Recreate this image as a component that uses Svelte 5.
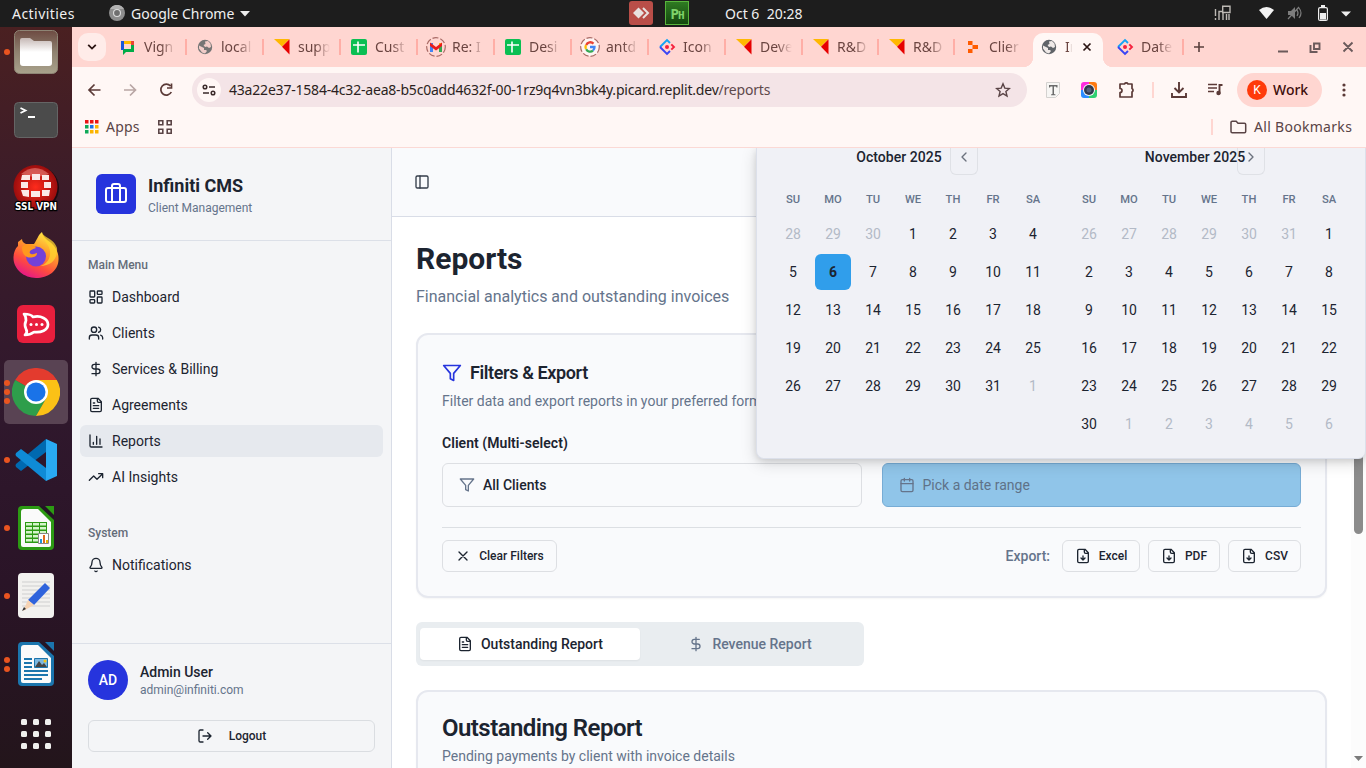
<script>
  const icons = {
    briefcase: '<path d="M16 20V4a2 2 0 0 0-2-2h-4a2 2 0 0 0-2 2v16"/><rect width="20" height="14" x="2" y="6" rx="2"/>',
    dashboard: '<rect width="7" height="9" x="3" y="3" rx="1"/><rect width="7" height="5" x="14" y="3" rx="1"/><rect width="7" height="9" x="14" y="12" rx="1"/><rect width="7" height="5" x="3" y="16" rx="1"/>',
    users: '<path d="M16 21v-2a4 4 0 0 0-4-4H6a4 4 0 0 0-4 4v2"/><circle cx="9" cy="7" r="4"/><path d="M22 21v-2a4 4 0 0 0-3-3.87M16 3.13a4 4 0 0 1 0 7.75"/>',
    dollar: '<path d="M12 2v20M17 5H9.5a3.5 3.5 0 0 0 0 7h5a3.5 3.5 0 0 1 0 7H6"/>',
    file: '<path d="M15 2H6a2 2 0 0 0-2 2v16a2 2 0 0 0 2 2h12a2 2 0 0 0 2-2V7ZM14 2v4a2 2 0 0 0 2 2h4M10 9H8M16 13H8M16 17H8"/>',
    chart: '<path d="M3 3v16a2 2 0 0 0 2 2h16M18 17V9M13 17V5M8 17v-3"/>',
    trend: '<path d="M22 7 13.5 15.5 8.5 10.5 2 17M16 7h6v6"/>',
    bell: '<path d="M10.268 21a2 2 0 0 0 3.464 0M3.262 15.326A1 1 0 0 0 4 17h16a1 1 0 0 0 .74-1.673C19.41 13.956 18 12.499 18 8A6 6 0 0 0 6 8c0 4.499-1.411 5.956-2.738 7.326"/>',
    logout: '<path d="M9 21H5a2 2 0 0 1-2-2V5a2 2 0 0 1 2-2h4M16 17l5-5-5-5M21 12H9"/>',
    panel: '<rect width="18" height="18" x="3" y="3" rx="2"/><path d="M9 3v18"/>',
    filter: '<path d="M22 3H2l8 9.46V19l4 2v-8.54Z"/>',
    calendar: '<path d="M8 2v4M16 2v4M3 10h18"/><rect width="18" height="18" x="3" y="4" rx="2"/>',
    x: '<path d="M18 6 6 18M6 6l12 12"/>',
    fileDown: '<path d="M15 2H6a2 2 0 0 0-2 2v16a2 2 0 0 0 2 2h12a2 2 0 0 0 2-2V7ZM14 2v4a2 2 0 0 0 2 2h4M12 18v-6M9 15l3 3 3-3"/>',
    left: '<path d="m15 18-6-6 6-6"/>',
    right: '<path d="m9 18 6-6-6-6"/>'
  };

  const tabs = [
    ['chat', 'Vign', 77], ['globe', 'local', 77], ['kite', 'supp', 77], ['sheet', 'Cust', 77],
    ['gmail', 'Re: I', 77], ['sheet', 'Desi', 77], ['google', 'antd', 77], ['ant', 'Icon', 77],
    ['kite', 'Deve', 77], ['kite', 'R&D', 76], ['kite', 'R&D', 76], ['replit', 'Clier', 78]
  ];

  const menu = [
    ['dashboard', 'Dashboard'], ['users', 'Clients'], ['dollar', 'Services & Billing'],
    ['file', 'Agreements'], ['chart', 'Reports'], ['trend', 'AI Insights']
  ];

  const weekdays = ['SU', 'MO', 'TU', 'WE', 'TH', 'FR', 'SA'];

  function buildMonth(name, lead, count, trail) {
    const days = [
      ...lead.map((n) => ({ n, out: true })),
      ...Array.from({ length: count }, (_, i) => ({ n: i + 1, out: false })),
      ...Array.from({ length: trail }, (_, i) => ({ n: i + 1, out: true }))
    ];
    return { name, days };
  }

  const months = [
    buildMonth('October 2025', [28, 29, 30], 31, 1),
    buildMonth('November 2025', [26, 27, 28, 29, 30, 31], 30, 6)
  ];

  const dock = [
    ['files', 1], ['terminal', 0], ['vpn', 0], ['firefox', 0], ['rocket', 0], ['chrome', 3],
    ['code', 1], ['calc', 1], ['editor', 1], ['writer', 2]
  ];
</script>

{#snippet icon(name, size)}
  <svg class="lucide" width={size} height={size} viewBox="0 0 24 24">{@html icons[name]}</svg>
{/snippet}

{#snippet favicon(kind)}
  <svg class="favicon" width="16" height="16" viewBox="0 0 16 16">
    {#if kind === 'chat'}
      <path d="M4 2h9v3H4z" fill="#ffba00" /><path d="M11 2h3v4h-3z" fill="#ea4335" />
      <path d="M11 6h3v7H6l-3 3v-6h8z" fill="#00ac47" /><path d="M1 2h3v9H1z" fill="#1a56db" />
    {:else if kind === 'globe'}
      <circle cx="8" cy="8" r="7.2" fill="#757575" />
      <path d="M2 6.500 5 8l2 1v2h2l1 1-2 2.500-3-1-3-4zM8 2.500l3-.5 2.500 2.500L14 8l-2 1-2-1.500L8 8 6.500 6l2-1z" fill="#ffd6d1" opacity=".9" />
    {:else if kind === 'kite'}
      <path d="M0 0h15.5L8 7.5z" fill="#ffb800" /><path d="M15.5.3v15.2L8 7.8z" fill="#e60000" />
    {:else if kind === 'sheet'}
      <rect width="16" height="16" rx="2" fill="#0abf53" /><path d="M7 2.500v11M2 6h12" stroke="#fff" stroke-width="1.600" />
    {:else if kind === 'gmail'}
      <circle cx="8" cy="8" r="9.3" fill="none" stroke="#a86a65" stroke-width="1.2" stroke-dasharray="6 2" />
      <path d="M2 13V4h3v9z" fill="#4285f4" /><path d="M11 13V4h3v9z" fill="#34a853" /><path d="M11 4h3v3h-3z" fill="#fbbc04" />
      <path d="M2 3.5 8 8l6-4.500v3.500L8 11.500 2 7z" fill="#ea1c1c" />
    {:else if kind === 'google'}
      <circle cx="8" cy="8" r="9.3" fill="#fff4f2" stroke="#a86a65" stroke-width="1.2" stroke-dasharray="6 2" />
      <g fill="none" stroke-width="2.3"><path d="M11.500 4.600A4.500 4.500 0 0 0 4.200 6" stroke="#ea4335" /><path d="M4 6a4.500 4.500 0 0 0 0 4.100" stroke="#fbbc04" />
      <path d="M4.200 10.200a4.500 4.500 0 0 0 6.800 1.400" stroke="#34a853" /><path d="M8 8h4.500a4.500 4.500 0 0 1-1.500 3.500" stroke="#4285f4" /></g>
    {:else if kind === 'ant'}
      <g fill="none" stroke-width="1.900"><path d="M11 4 8 1 1 8" stroke="#14a4f5" /><path d="m1 8 7 7 3-3" stroke="#3a45f5" /><path d="M12.300 5.300 15 8l-2.700 2.700" stroke="#f5223d" /></g>
      <circle cx="8" cy="8" r="2" fill="#f5223d" />
    {:else}
      <path d="M3 2h4.500v4H3zM7.500 6H13v4H7.500zM3 10h4.500v4H3z" fill="#ff5c00" />
    {/if}
  </svg>
{/snippet}

{#snippet app(kind)}
  {#if kind === 'files'}
    <svg width="44" height="44" viewBox="0 0 44 44"><defs><linearGradient id="fg" x2="0" y2="1"><stop stop-color="#6d4a42" /><stop offset=".5" stop-color="#8f8270" /><stop offset="1" stop-color="#a9a28c" /></linearGradient><linearGradient id="ff" x2="0" y2="1"><stop stop-color="#c5b8b5" /><stop offset=".5" stop-color="#fff" /></linearGradient></defs><rect x=".5" y=".5" width="43" height="43" rx="5" fill="url(#fg)" stroke="#8e8575" /><path d="M6 10a2 2 0 0 1 2-2h8l4 3h16a2 2 0 0 1 2 2v20a3 3 0 0 1-3 3H9a3 3 0 0 1-3-3z" fill="url(#ff)" /></svg>
  {:else if kind === 'terminal'}
    <svg width="44" height="36" viewBox="0 0 44 36"><rect x=".5" y=".5" width="43" height="35" rx="4" fill="#4b4b4b" stroke="#656565" /><path d="m6.500 6 5 2.500-5 2.500M14 15h7" fill="none" stroke="#fff" stroke-width="1.800" /></svg>
  {:else if kind === 'vpn'}
    <svg width="46" height="48" viewBox="0 0 46 48"><defs><radialGradient id="vg"><stop stop-color="#ff2b1c" /><stop offset="1" stop-color="#9b0d0d" /></radialGradient></defs><circle cx="24" cy="24" r="22" fill="#1c0b12" /><circle cx="22.500" cy="23" r="22" fill="url(#vg)" /><path d="M8 10q14-12 28 0-14 6-28 0" fill="#f39b94" opacity=".5" /><path d="M9 11h8v5H8zM19 10h8v6h-8zM29 11h7v5h-7zM8 18h7v6H8zM31 18h7v6h-7zM8 26h8v7l-6-1zM18 27h9v6h-9zM29 26h8l-1 6h-7z" fill="#fbe9e7" /><text x="2" y="46" textLength="42" lengthAdjust="spacingAndGlyphs" font-family="DejaVu Sans" font-size="10" font-weight="700" fill="#fff" stroke="#000" stroke-width="2.400" paint-order="stroke">SSL VPN</text></svg>
  {:else if kind === 'firefox'}
    <svg width="48" height="48" viewBox="0 0 48 48"><defs><linearGradient id="fx" x1=".8" y1="0" x2=".3" y2="1"><stop stop-color="#fff44f" /><stop offset=".35" stop-color="#ffa52b" /><stop offset=".7" stop-color="#ff4d3d" /><stop offset="1" stop-color="#e4158b" /></linearGradient></defs><path d="M30 0c1 5 4 7 8 10 5 4 9 10 8.500 18C46 39 36 46 24 46S1 37 1.500 25C2 19 4 16 6 14v-4l4-3c0 3 2 4 4 5h8c3-4 4-9 8-12" fill="url(#fx)" /><circle cx="24" cy="24.500" r="10" fill="#7341d8" /><path d="M10 15c5-5 12-2 14 1-6 2-8 4-5 6 3 1 4-1 6-1 0 5-7 5-10 4-4-2-5-6-5-10" fill="#ff981d" /><path d="M30 1c0 7 7 10 8 18 1 9-5 14-10 15 12 0 18-8 17-18-2-6-6-8-9-10-3-2-5-3-6-5" fill="#ffd62f" opacity=".75" /></svg>
  {:else if kind === 'rocket'}
    <svg width="38" height="38" viewBox="0 0 38 38"><rect width="38" height="38" rx="6" fill="#e81f3d" /><path d="M7 9q7 0 9 3c8-2 15 2 15 7.500S24 28 17 27q-4 3-9 3 3-3 1-6-2-4 0-8.500Q9 11 7 9z" fill="none" stroke="#fff" stroke-width="2.700" stroke-linejoin="round" /><circle cx="14" cy="19.500" r="1.500" fill="#fff" /><circle cx="19.500" cy="19.500" r="1.500" fill="#fff" /><circle cx="25" cy="19.500" r="1.500" fill="#fff" /></svg>
  {:else if kind === 'chrome'}
    <svg width="48" height="48" viewBox="0 0 48 48"><path d="M24 24 3.200 12A24 24 0 0 1 44.800 12z" fill="#e33b2e" /><path d="M24 24 3.200 12A24 24 0 0 0 24 48L34.400 30z" fill="#2e9e4b" /><path d="M24 12h20.800A24 24 0 0 1 24 48l10.400-18z" fill="#fbc116" /><circle cx="24" cy="24" r="12" fill="#fff" /><circle cx="24" cy="24" r="9.500" fill="#1a73e8" /></svg>
  {:else if kind === 'code'}
    <svg width="42" height="42" viewBox="0 0 42 42"><path d="M31 0v13L6 32 1 28q-1-2 0-3z" fill="#0069b0" /><path d="M31 42V29L6 10l-5 4q-1 2 0 3z" fill="#0f8bd6" /><path d="m31 0 11 5v32l-11 5z" fill="#29aaf3" /></svg>
  {:else if kind === 'calc' || kind === 'writer'}
    {@const c = kind === 'calc' ? '#2c9a13' : '#1b75ad'}
    <svg width="36" height="44" viewBox="0 0 36 44"><rect width="36" height="44" rx="4" fill={c} /><path d="M3 6a3 3 0 0 1 3-3h14l13 13v23a2 2 0 0 1-2 2H5a2 2 0 0 1-2-2z" fill="#fafafa" /><path d="M21 0h15v14z" fill="#241525" /><path d="M27 0h9v9z" fill={c} />
      {#if kind === 'calc'}
        <rect x="7" y="16" width="22" height="21" fill="#2c9a13" /><path d="M8 17h6v2.500H8zM15 17h6v2.500h-6zM22 17h6v2.500h-6zM8 21h6v2.500H8zM15 21h6v2.500h-6zM22 21h6v2.500h-6zM8 25h6v2.500H8zM15 25h6v2.500h-6zM22 25h6v2.500h-6zM8 29h6v2.500H8zM15 29h6v2.500h-6zM8 33h6v2.500H8zM15 33h6v2.500h-6z" fill="#d4f5c9" /><path d="M20.500 27.500h10v10h-10z" fill="#fff" stroke="#888" /><path d="M22 33h2v4h-2z" fill="#2196d8" /><path d="M25 29h2v8h-2z" fill="#e06a1c" /><path d="M28 34h2v3h-2z" fill="#e8b500" />
      {:else}
        <path d="M6 17h8M6 21h8M6 25h8M6 29h24M6 33h24M6 37h18" stroke="#1b75ad" stroke-width="2" /><path d="M16.500 16.500h13v9h-13z" fill="#7db8e0" stroke="#1b75ad" /><path d="m17 25 4-6 3 4 2-2 3 4z" fill="#444" /><circle cx="27" cy="19" r="1.500" fill="#f5c211" />
      {/if}
    </svg>
  {:else}
    <svg width="36" height="46" viewBox="0 0 36 46"><rect width="36" height="45" rx="4" fill="#f2f1ef" /><path d="M4 9h28M4 13h28M4 17h28M4 21h28M4 25h28M4 29h28M4 33h28" stroke="#cfcfcf" /><path d="m10 27 17-17 5 5-16 17z" fill="#2f63dc" /><path d="m10 27 6 5-11 6z" fill="#f6d3b3" /><path d="m6 34-2 4 4-2z" fill="#333" /></svg>
  {/if}
{/snippet}

<div class="desktop">
  <header class="topbar">
    <span class="activities">Activities</span>
    <svg class="tb-chrome" width="16" height="16" viewBox="0 0 16 16"><circle cx="8" cy="8" r="8" fill="#8d8d8d" /><path d="M1 4a8 8 0 0 1 14 0H8z" fill="#b0b0b0" /><circle cx="8" cy="8" r="4" fill="#ddd" /><circle cx="8" cy="8" r="2.900" fill="#6f6f6f" /></svg>
    <span class="appname">Google Chrome</span>
    <svg class="caret" width="10" height="6"><path d="M0 0h10L5 5.500z" fill="#eee" /></svg>
    <svg class="anydesk" width="24" height="24" viewBox="0 0 24 24"><rect width="24" height="24" rx="3" fill="#b94e48" /><path d="m9.500 6.500 5.500 5.500-5.500 5.500L4 12z" fill="#e8e2e0" /><path d="m14 7 5 5-5 5" fill="none" stroke="#e8e2e0" stroke-width="2" /></svg>
    <span class="ph">P<small>H</small></span>
    <span class="clock">Oct 6&nbsp; 20:28</span>
    <svg class="tray" width="140" height="20" viewBox="0 0 140 20">
      <g fill="none" stroke="#bdb9b4" stroke-width="1.400"><path d="M2.500 6v7M2.500 15v2M6 17V8.500h3M10 17V9M13.500 17v-6M16 17v-6M9.700 3.200h7.300v6.300H9.700z" /></g>
      <path d="M46 7q7.500-6 15 0l-7.500 9z" fill="#f2f2f2" />
      <g opacity=".5"><path d="M75 8h3l4-4v12l-4-4h-3z" fill="#ddd" /><path d="M84 7q2 3 0 6M86 5q4 5 0 10M75 16 86 4" fill="none" stroke="#ddd" stroke-width="1.200" /></g>
      <path d="M108 2h4v2h-4z" fill="#eee" /><rect x="105.600" y="4.600" width="8.800" height="12.800" rx="1.500" fill="none" stroke="#eee" stroke-width="1.200" /><path d="M107 10h6v6.500h-6z" fill="#eee" />
      <path d="M128 8.500h10l-5 5z" fill="#eee" />
    </svg>
  </header>

  <div class="below">
    <nav class="dock">
      {#each dock as [kind, dots]}
        <div class="dock-item" class:current={kind === 'chrome'}>
          <div class="dots">{#each { length: dots } as _}<i></i>{/each}</div>
          {@render app(kind)}
        </div>
      {/each}
      <div class="grid-dots">{#each { length: 9 } as _}<i></i>{/each}</div>
    </nav>

    <div class="window">
      <div class="tabstrip">
        <div class="tab-search"><svg width="10" height="8" viewBox="0 0 10 8"><path d="m1.200 1.800 3.800 3.800 3.800-3.800" fill="none" stroke="#2b1513" stroke-width="1.800" /></svg></div>
        {#each tabs as [kind, label, w], i}
          <div class="tab" class:nosep={i === tabs.length - 1} style="width: {w}px">{@render favicon(kind)}<span>{label}</span></div>
        {/each}
        <div class="tab active">
          <svg class="favicon" width="16" height="16" viewBox="0 0 16 16"><circle cx="8" cy="8" r="7.200" fill="#5f6368" /><path d="M2 6.500 5 8l2 1v2h2l1 1-2 2.500-3-1-3-4zM8 2.500l3-.5 2.500 2.500L14 8l-2 1-2-1.500L8 8 6.500 6l2-1z" fill="#fff7f5" opacity=".9" /></svg>
          <span>In</span>
          <svg width="10" height="10" viewBox="0 0 10 10"><path d="m1.500 1.500 7 7m0-7-7 7" stroke="#2b1513" stroke-width="1.700" /></svg>
        </div>
        <div class="tab last" style="width: 81px">{@render favicon('ant')}<span>Date</span></div>
        <svg class="plus" width="12" height="12"><path d="M6 1v10M1 6h10" stroke="#5a403d" stroke-width="1.600" /></svg>
        <svg class="winctl" width="78" height="14" viewBox="0 0 78 14"><g fill="none" stroke="#6b5a5b" stroke-width="1.900"><path d="M1 11.500h10M37 3.500h5.500v5.500H37zM33.500 5v7h7M66.500 2.500l9 9m0-9-9 9" /></g></svg>
      </div>

      <div class="toolbar">
        <svg class="navicons" width="100" height="20" viewBox="0 0 100 20"><g fill="none" stroke-width="1.700"><path d="M16.500 10H5.500M10.500 4.500 5 10l5.500 5.500" stroke="#5b3a37" /><path d="M40 10h11.500M46 4.500l5.500 5.500-5.500 5.500" stroke="#b9a6a4" /><path d="M86.500 6a5.500 5.500 0 1 0 .8 6M87.500 3.500V8H83" stroke="#5b3a37" /></g></svg>
        <div class="url">
          <div class="site"><svg width="14" height="12" viewBox="0 0 14 12"><g fill="none" stroke="#3a2a2a" stroke-width="1.500"><circle cx="3" cy="3" r="1.800" /><path d="M7 3h6M1 9h6" /><circle cx="11" cy="9" r="1.800" /></g></svg></div>
          <span class="addr">43a22e37-1584-4c32-aea8-b5c0add4632f-00-1rz9q4vn3bk4y.picard.replit.dev<em>/reports</em></span>
          <svg class="star" width="16" height="16" viewBox="0 0 16 16"><path d="m8 1.800 1.800 4.300 4.600.4-3.500 3 1.100 4.500L8 11.600 4 14l1.100-4.500-3.500-3 4.600-.4z" fill="none" stroke="#5a4446" stroke-width="1.400" /></svg>
        </div>
        <svg class="ext" width="190" height="20" viewBox="0 0 190 20">
          <path d="M4.500 2.500h13v11l-4 4h-9z" fill="#f7f6f4" stroke="#d4d2d0" /><path d="M7 5h8.500v2.500h-1L14 6.500h-2v7.500l1.500.5v.7H9v-.7l1.500-.5V6.500h-2L8 7.500H7z" fill="#6b6b6b" />
          <path d="M39 5a3 3 0 0 1 3-3h5v8h-8z" fill="#ff2ce0" /><path d="M47 2h5a3 3 0 0 1 3 3v5h-8z" fill="#ff7a12" /><path d="M39 10h8v8h-5a3 3 0 0 1-3-3z" fill="#2b8cff" /><path d="M47 10h8v5a3 3 0 0 1-3 3h-5z" fill="#2fd071" />
          <circle cx="47" cy="10" r="6" fill="#f4f4f4" /><circle cx="47" cy="10" r="5" fill="#30394d" /><circle cx="47" cy="10" r="2.500" fill="#55617a" />
          <path d="M77 4h4.500a2 2 0 0 1 3.500 0h4v4.500a2 2 0 0 1 0 3.500v5H77v-4.500a2 2 0 0 0 0-4z" transform="translate(1 0)" fill="none" stroke="#5b3a37" stroke-width="1.700" stroke-linejoin="round" />
          <path d="M110 2h2v16h-2z" fill="#ffd6d1" />
          <g fill="none" stroke="#5b3a37" stroke-width="1.900"><path d="M137 2v10M132.500 8l4.500 4.500L141.500 8M130 13v4h14v-4" /><path d="M166 4.500h9M166 8h9M166 11.500h6" stroke-width="1.500" /><path d="M177.500 14V5h3" /></g><circle cx="176.500" cy="13" r="2.200" fill="#5b3a37" />
        </svg>
        <div class="profile"><b>K</b><span>Work</span></div>
        <svg class="more" width="4" height="16"><circle cx="2" cy="3" r="1.600" fill="#5b3a37" /><circle cx="2" cy="8" r="1.600" fill="#5b3a37" /><circle cx="2" cy="13" r="1.600" fill="#5b3a37" /></svg>
      </div>

      <div class="bookmarks">
        <svg width="14" height="14" viewBox="0 0 14 14"><path d="M0 0h3.500v3.500H0zM5 0h3.500v3.500H5zM10 0h3.500v3.500H10z" fill="#ea1515" /><path d="M0 5h3.500v3.500H0zM0 10h3.500v3.500H0z" fill="#0fa958" /><path d="M5 5h3.500v3.500H5z" fill="#1a73e8" /><path d="M10 5h3.500v3.500H10zM5 10h3.500v3.500H5zM10 10h3.500v3.500H10z" fill="#fbb400" /></svg>
        <span class="apps">Apps</span>
        <svg class="boxes" width="14" height="14" viewBox="0 0 14 14"><path d="M.8.8h4v4h-4zM9.200.8h4v4h-4zM.8 9.200h4v4h-4zM9.200 9.200h4v4h-4z" fill="none" stroke="#5a4446" stroke-width="1.600" /></svg>
        <i class="bar"></i>
        <svg width="17" height="14" viewBox="0 0 17 14"><path d="M1 2.500a1.200 1.200 0 0 1 1.200-1.200h4l1.800 2h6.500a1.200 1.200 0 0 1 1.200 1.200v7a1.200 1.200 0 0 1-1.200 1.200H2.200A1.200 1.200 0 0 1 1 11.500z" fill="none" stroke="#5a4446" stroke-width="1.500" /></svg>
        <span class="all">All Bookmarks</span>
      </div>

      <div class="page">
        <aside>
          <div class="brand">
            <div class="logo">{@render icon('briefcase', 24)}</div>
            <div><h2>Infiniti CMS</h2><p>Client Management</p></div>
          </div>
          <div class="menus">
            <h6>Main Menu</h6>
            {#each menu as [ic, label]}
              <a class:on={label === 'Reports'}>{@render icon(ic, 16)}{label}</a>
            {/each}
            <h6 class="sys">System</h6>
            <a>{@render icon('bell', 16)}Notifications</a>
          </div>
          <div class="foot">
            <div class="user"><div class="avatar">AD</div><div><b>Admin User</b><p>admin@infiniti.com</p></div></div>
            <div class="logout">{@render icon('logout', 16)}Logout</div>
          </div>
        </aside>

        <main>
          <div class="head">{@render icon('panel', 16)}</div>
          <div class="content">
            <h1>Reports</h1>
            <p class="sub">Financial analytics and outstanding invoices</p>
            <section class="card filters">
              <h3>{@render icon('filter', 20)}Filters &amp; Export</h3>
              <p class="desc">Filter data and export reports in your preferred format</p>
              <div class="lbl">Client (Multi-select)</div>
              <div class="fields">
                <div class="field">{@render icon('filter', 16)}All Clients</div>
                <div class="field date">{@render icon('calendar', 16)}Pick a date range</div>
              </div>
              <div class="actions">
                <div class="btn clear">{@render icon('x', 16)}Clear Filters</div>
                <span class="export">Export:</span>
                <div class="btn" style="width: 78px">{@render icon('fileDown', 16)}Excel</div>
                <div class="btn" style="width: 72px">{@render icon('fileDown', 16)}PDF</div>
                <div class="btn" style="width: 73px">{@render icon('fileDown', 16)}CSV</div>
              </div>
            </section>
            <div class="switch">
              <div class="sel">{@render icon('file', 16)}Outstanding Report</div>
              <div>{@render icon('dollar', 16)}Revenue Report</div>
            </div>
            <section class="card report">
              <h2>Outstanding Report</h2>
              <p class="desc">Pending payments by client with invoice details</p>
            </section>
          </div>
        </main>

        <div class="scroll"><div class="thumb"></div><svg width="9" height="5"><path d="M0 0h9L4.500 5z" fill="#7b7b7b" /></svg></div>

        <div class="popover">
          {#each months as m, mi}
            <div class="month">
              <div class="caption">{m.name}</div>
              <div class="nav" class:next={mi === 1}>{@render icon(mi ? 'right' : 'left', 16)}</div>
              <div class="days week">{#each weekdays as d}<span>{d}</span>{/each}</div>
              <div class="days">
                {#each m.days as d}
                  <span class:out={d.out} class:today={mi === 0 && d.n === 6}>{d.n}</span>
                {/each}
              </div>
            </div>
          {/each}
        </div>
      </div>
    </div>
  </div>
</div>

<style>
  * { box-sizing: border-box; }
  h1, h2, h3, h6, p { margin: 0; }
  svg { flex: none; display: block; }
  .desktop { width: 1366px; height: 768px; overflow: hidden; display: flex; flex-direction: column; font-family: Roboto, sans-serif; color: #1c2430; white-space: nowrap; }
  .lucide { fill: none; stroke: currentColor; stroke-width: 2; stroke-linecap: round; stroke-linejoin: round; }

  .topbar { height: 27px; flex: none; background: #1d1d1d; color: #f0f0f0; display: flex; align-items: center; font: 14px "Noto Sans", sans-serif; padding: 0 0 1px 12px; }
  .activities { width: 97px; letter-spacing: .45px; }
  .appname { margin-left: 6px; width: 104px; }
  .caret { margin: 2px 0 0 5px; }
  .anydesk { margin-left: 379px; }
  .ph { width: 24px; height: 24px; margin-left: 12px; border: 1px solid #58b53c; background: linear-gradient(#2f7a22, #14480f); color: #7fd36a; font: 700 14px/24px "DejaVu Sans Mono", monospace; text-align: center; letter-spacing: -1px; }
  .ph small { font-size: 11px; }
  .clock { margin-left: 36px; width: 79px; }
  .tray { margin-left: 409px; }

  .below { flex: 1; min-height: 0; display: flex; }
  .dock { width: 72px; background: linear-gradient(#4a2021, #3c1c29 22%, #30182d 50%, #2a1427 75%, #23151b); overflow: hidden; display: flex; flex-direction: column; align-items: center; }
  .dock-item { width: 64px; height: 64px; margin-bottom: 4px; flex: none; display: flex; align-items: center; justify-content: center; position: relative; border-radius: 5px; }
  .dock-item:first-child { margin-top: -7px; }
  .dock-item.current { background: #594353; }
  .dots { position: absolute; left: 0; top: 0; height: 64px; display: flex; flex-direction: column; justify-content: center; gap: 3px; }
  .dots i { width: 6px; height: 6px; border-radius: 3px; background: #e95420; }
  .grid-dots { display: grid; grid-template-columns: repeat(3, 6px); gap: 6px; margin-top: 19px; }
  .grid-dots i { width: 6px; height: 6px; border-radius: 1.5px; background: #f0f0ee; }

  .window { width: 1294px; display: flex; flex-direction: column; background: #fff7f5; }
  .tabstrip { height: 40px; flex: none; background: #ffd6d1; display: flex; align-items: center; padding-left: 6px; font: 14px "Noto Sans", sans-serif; color: #6b4541; }
  .tab-search { width: 28px; height: 28px; border-radius: 10px; background: #ffece9; display: flex; align-items: center; justify-content: center; margin-right: 4px; flex: none; }
  .tab { height: 16px; flex: none; display: flex; align-items: center; padding-left: 10px; gap: 8px; border-right: 2px solid #ffaea6; }
  .tab.nosep { border-color: transparent; }
  .favicon { overflow: visible; }
  .tab span { width: 38px; overflow: hidden; mask-image: linear-gradient(90deg, #000 45%, transparent 84%); line-height: 20px; }
  .tab.active { width: 70px; height: 34px; margin-top: 6px; padding: 0 0 6px 8px; border: 0; background: #fff7f5; border-radius: 10px 10px 0 0; position: relative; }
  .tab.active::before, .tab.active::after { content: ''; position: absolute; bottom: 0; width: 10px; height: 10px; background: radial-gradient(circle at 0 0, #ffd6d1 10px, #fff7f5 10.500px); }
  .tab.active::before { left: -10px; }
  .tab.active::after { right: -10px; transform: scaleX(-1); }
  .tab.active span { width: 7px; margin-right: 2px; mask-image: linear-gradient(90deg, #000 50%, transparent); }
  .tab.last { padding-left: 14px; }
  .plus { margin-left: 9px; }
  .winctl { margin-left: 72px; }

  .toolbar { height: 46px; flex: none; display: flex; align-items: center; background: #fff7f5; }
  .navicons { margin-left: 12px; }
  .url { margin-left: 8px; width: 835px; height: 34px; border-radius: 17px; background: #f4e4e7; display: flex; align-items: center; padding: 0 16px 0 5px; }
  .site { width: 24px; height: 24px; border-radius: 12px; background: #fff7f5; display: flex; align-items: center; justify-content: center; }
  .addr { margin-left: 8px; padding-bottom: 2px; font: 14px "Noto Sans", sans-serif; color: #2b1f21; width: 560px; letter-spacing: -.2px; }
  .addr em { font-style: normal; color: #5e494c; }
  .star { margin-left: auto; }
  .ext { margin-left: 15px; }
  .profile { margin-left: 5px; width: 85px; height: 34px; border-radius: 17px; background: #ffd6d1; display: flex; align-items: center; gap: 6px; padding-left: 10px; font: 500 14px "Noto Sans", sans-serif; color: #3d0d0a; }
  .profile span { padding-bottom: 2px; }
  .profile b { width: 20px; height: 20px; border-radius: 50%; background: #ff3a0a; color: #fff; font: 12px/20px Roboto, sans-serif; text-align: center; }
  .more { margin-left: 20px; }

  .bookmarks { height: 35px; flex: none; border-bottom: 1px solid #fbd9d5; display: flex; align-items: center; padding: 0 14px 6px 13px; font: 14px "Noto Sans", sans-serif; color: #5a4446; }
  .apps { margin-left: 7px; width: 36px; padding-bottom: 2px; letter-spacing: .2px; }
  .boxes { margin-left: 16px; }
  .bar { width: 2px; height: 16px; background: #ffd6d1; margin: 0 17px 0 auto; }
  .all { margin-left: 7px; width: 98px; padding-bottom: 2px; letter-spacing: .3px; }

  .page { flex: 1; min-height: 0; display: flex; position: relative; overflow: hidden; background: #fff; }
  aside { width: 320px; flex: none; background: #f4f5f7; border-right: 1px solid #d9dde7; display: flex; flex-direction: column; }
  .brand { height: 93px; border-bottom: 1px solid #dce0e8; display: flex; align-items: center; gap: 12px; padding-left: 24px; }
  .logo { width: 40px; height: 40px; border-radius: 6px; background: #2634dd; color: #fff; display: flex; align-items: center; justify-content: center; }
  .brand h2 { font-size: 18px; line-height: 28px; font-weight: 700; }
  .brand p, .user p { font-size: 12px; line-height: 16px; color: #65748b; }
  .menus { padding: 8px; display: flex; flex-direction: column; gap: 4px; }
  h6 { font-size: 12px; line-height: 32px; font-weight: 500; color: #646c79; padding-left: 8px; margin-bottom: -4px; }
  h6.sys { margin-top: 20px; }
  .menus a { height: 32px; border-radius: 6px; display: flex; align-items: center; gap: 8px; padding-left: 8px; font-size: 14px; }
  .menus a.on { background: #e6e9ee; }
  .foot { margin-top: auto; height: 125px; border-top: 1px solid #dce0e8; padding: 16px; }
  .user { display: flex; align-items: center; gap: 12px; height: 40px; }
  .avatar { width: 40px; height: 40px; border-radius: 50%; background: #2634dd; color: #fff; font: 500 14px/40px Roboto, sans-serif; text-align: center; }
  .user b { display: block; font-size: 14px; line-height: 20px; font-weight: 500; }
  .logout { margin-top: 20px; height: 32px; border: 1px solid #dadde1; border-radius: 6px; display: flex; align-items: center; justify-content: center; gap: 16px; font-size: 12px; font-weight: 500; }

  main { width: 959px; overflow: hidden; }
  .head { height: 69px; background: #f9fafc; border-bottom: 1px solid #d9dde7; display: flex; align-items: center; padding-left: 22px; color: #343c49; }
  .content { padding: 24px; }
  h1 { font-size: 30px; line-height: 36px; font-weight: 700; }
  .sub { font-size: 16px; line-height: 24px; margin-top: 8px; color: #65748b; }
  .card { border: 2px solid #e6e8ef; border-radius: 12px; background: #f9fafc; padding: 24px; box-shadow: 0 1px 2px #0000000a; }
  .filters { margin-top: 24px; height: 265px; }
  h3 { font-size: 18px; line-height: 28px; font-weight: 600; letter-spacing: -.38px; display: flex; align-items: center; gap: 8px; }
  h3 :global(svg) { color: #2634dd; }
  .desc { font-size: 14px; line-height: 20px; color: #65748b; }
  .filters .desc { margin-top: 4px; }
  .lbl { margin-top: 22px; font-size: 14px; line-height: 20px; font-weight: 600; letter-spacing: .05px; }
  .fields { display: grid; grid-template-columns: 420px 419px; gap: 20px; margin-top: 10px; }
  .field { height: 44px; border: 1px solid #dddfe3; border-radius: 6px; display: flex; align-items: center; gap: 8px; padding-left: 16px; font-size: 14px; font-weight: 500; }
  .field :global(svg) { color: #65748b; }
  .field.date { background: #90c5e9; border-color: #77acd5; color: #5f7288; font-weight: 400; gap: 7.500px; }
  .actions { margin-top: 20px; border-top: 1px solid #dcdfe3; padding-top: 12px; display: flex; align-items: center; gap: 8px; }
  .btn { height: 32px; border: 1px solid #dddfe3; border-radius: 6px; display: flex; align-items: center; justify-content: center; gap: 8px; font-size: 12px; font-weight: 500; }
  .clear { width: 115px; }
  .export { margin: 0 4px 0 auto; font-size: 14px; font-weight: 500; color: #65748b; }
  .switch { margin-top: 24px; width: 448px; height: 44px; border-radius: 6px; background: #e9edf0; display: flex; align-items: center; padding: 0 4px; color: #65748b; }
  .switch div { width: 220px; height: 32px; display: flex; align-items: center; justify-content: center; gap: 8px; font-size: 14px; font-weight: 500; border-radius: 4px; }
  .switch .sel { background: #fff; color: #1c2430; box-shadow: 0 1px 2px #0000000d; }
  .report { margin-top: 24px; height: 200px; padding-top: 20px; }
  .report h2 { font-size: 24px; line-height: 32px; font-weight: 600; letter-spacing: -.55px; }
  .report .desc { margin-top: 2px; }

  .scroll { width: 15px; background: #fcfcfc; display: flex; flex-direction: column; align-items: center; }
  .thumb { width: 9px; height: 386px; background: #8b8b8b; border-radius: 0 0 5px 5px; }
  .scroll svg { margin-top: 222px; }

  .popover { position: absolute; left: 684px; top: 0; width: 610px; height: 311px; background: #f0f1f6; border: 1px solid #dce0ea; border-top: 0; border-radius: 0 0 8px 8px; box-shadow: 0 4px 16px #00000026, 0 2px 6px #0000001a; display: flex; gap: 20px; padding: 0 18px; }
  .month { width: 276px; position: relative; }
  .caption { height: 39px; line-height: 19px; padding-right: 28px; text-align: center; font-size: 14px; font-weight: 500; letter-spacing: .03px; }
  .nav { position: absolute; left: 175px; top: -1px; width: 28px; height: 28px; border: 1px solid #dfe1e6; border-top: 0; border-radius: 0 0 6px 6px; display: flex; align-items: flex-start; justify-content: center; padding-top: 2px; color: #6b717d; }
  .nav.next { left: 166px; }
  .days { display: grid; grid-template-columns: repeat(7, 36px); gap: 2px 4px; }
  .days span { height: 36px; line-height: 36px; border-radius: 6px; text-align: center; font-size: 14px; }
  .week { padding: 5px 0 8px; }
  .week span { height: 16px; line-height: 16px; font-size: 11.2px; font-weight: 500; color: #65748b; }
  .days .out { color: #b3bac6; }
  .days .today { background: #309eeb; font-weight: 700; }
</style>
